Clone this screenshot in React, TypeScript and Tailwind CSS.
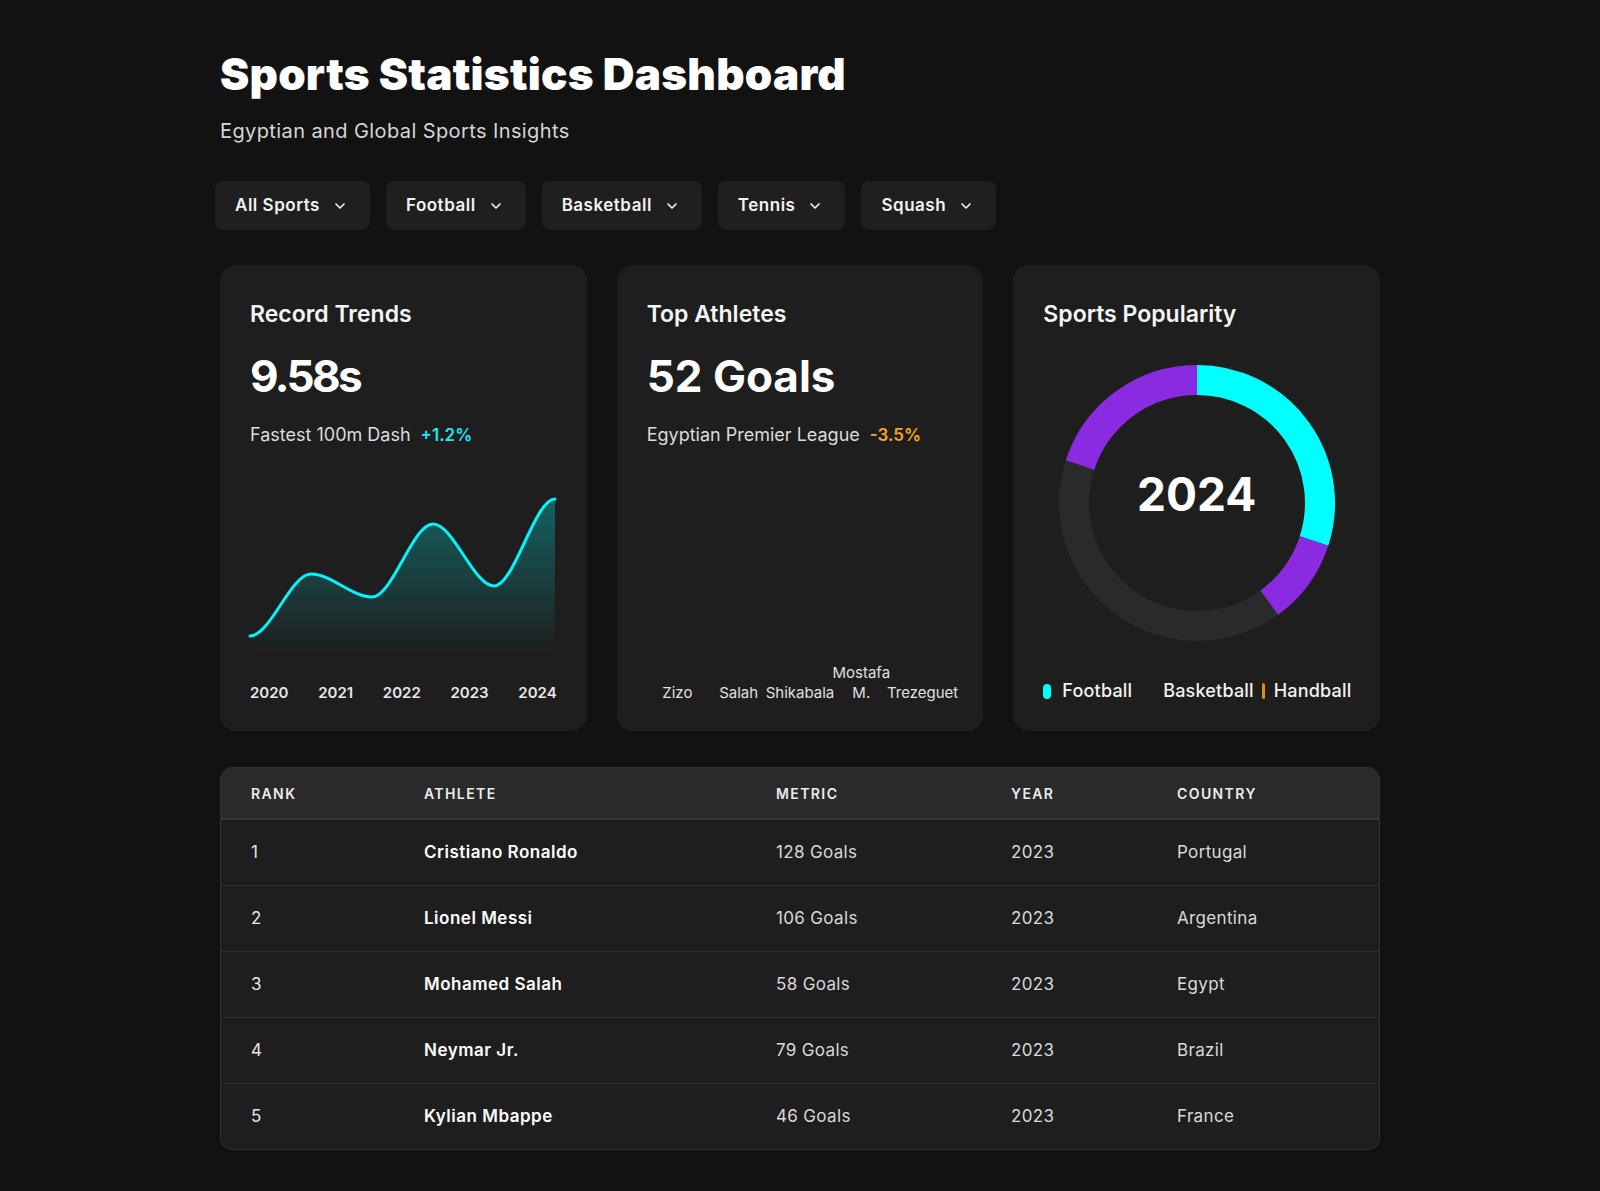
import React from "react";
import { ChevronDown } from "lucide-react";

const filters = ["All Sports", "Football", "Basketball", "Tennis", "Squash"];

const rows = [
  { rank: 1, name: "Cristiano Ronaldo", metric: "128 Goals", year: "2023", country: "Portugal" },
  { rank: 2, name: "Lionel Messi", metric: "106 Goals", year: "2023", country: "Argentina" },
  { rank: 3, name: "Mohamed Salah", metric: "58 Goals", year: "2023", country: "Egypt" },
  { rank: 4, name: "Neymar Jr.", metric: "79 Goals", year: "2023", country: "Brazil" },
  { rank: 5, name: "Kylian Mbappe", metric: "46 Goals", year: "2023", country: "France" },
];

const linePath =
  "M0,147 C20.33,147 40.67,85 61,85 C81.33,85 101.67,108 122,108 C142.33,108 162.67,35 183,35 C203.33,35 223.67,97 244,97 C264.33,97 284.67,10 305,10";

function arc(a0: number, a1: number) {
  const r = 123;
  const c = 138;
  const pt = (a: number) => {
    const t = (a * Math.PI) / 180;
    return [c + r * Math.sin(t), c - r * Math.cos(t)];
  };
  const [x0, y0] = pt(a0);
  const [x1, y1] = pt(a1);
  const large = a1 - a0 > 180 ? 1 : 0;
  return `M${x0.toFixed(2)},${y0.toFixed(2)} A${r},${r} 0 ${large} 1 ${x1.toFixed(2)},${y1.toFixed(2)}`;
}

function TrendChart() {
  return (
    <svg width="305" height="163" viewBox="0 0 305 163" className="block overflow-visible">
      <defs>
        <linearGradient id="trendFill" x1="0" y1="0" x2="0" y2="1">
          <stop offset="0%" stopColor="#00ffff" stopOpacity="0.3" />
          <stop offset="100%" stopColor="#00ffff" stopOpacity="0" />
        </linearGradient>
      </defs>
      <path d={`${linePath} L305,163 L0,163 Z`} fill="url(#trendFill)" />
      <path d={linePath} fill="none" stroke="#00f5ff" strokeWidth="3" strokeLinecap="round" />
    </svg>
  );
}

function Donut() {
  return (
    <div className="relative w-[276px] h-[276px] mx-auto mt-[35px]">
      <svg width="276" height="276" viewBox="0 0 276 276" className="block">
        <circle cx="138" cy="138" r="123" fill="none" stroke="#2a2a2a" strokeWidth="30" />
        <path d={arc(0, 108)} fill="none" stroke="#00ffff" strokeWidth="30" />
        <path d={arc(108, 144)} fill="none" stroke="#8a2be2" strokeWidth="30" />
        <path d={arc(288, 360)} fill="none" stroke="#8a2be2" strokeWidth="30" />
      </svg>
      <div className="absolute inset-0 flex items-center justify-center pb-[19px]">
        <span className="text-[46px] leading-[48px] font-bold text-white">2024</span>
      </div>
    </div>
  );
}

export default function App() {
  return (
    <div className="min-h-screen bg-[#121212] text-white font-['Inter',sans-serif]">
      <div className="w-[1160px] mx-auto pt-[52px] pb-[41px]">
        <h1 className="text-[44px] leading-[44px] font-black tracking-[0.005em] text-white">
          Sports Statistics Dashboard
        </h1>
        <p className="mt-[21px] text-[20px] leading-[28px] tracking-[0.02em] text-[#d6d6d6]">
          Egyptian and Global Sports Insights
        </p>

        <div className="mt-[36px] -ml-[5px] flex gap-4">
          {filters.map((f) => (
            <button
              key={f}
              className="h-[49px] pl-5 pr-[22px] rounded-lg bg-[#1f1f1f] flex items-center gap-3 text-[17px] tracking-[0.03em] font-semibold text-[#f2f2f2]"
            >
              <span>{f}</span>
              <ChevronDown size={16} strokeWidth={2.5} />
            </button>
          ))}
        </div>

        <div className="mt-[35px] grid grid-cols-3 gap-[30px]">
          {/* Record Trends */}
          <div className="h-[466px] rounded-2xl bg-[#1e1e1e] px-[30px] pt-[33px] pb-[28px] flex flex-col">
            <h2 className="text-[23px] leading-[32px] font-semibold text-[#f5f5f5]">Record Trends</h2>
            <div className="mt-[22px] text-[44px] leading-[48px] font-bold tracking-[-0.06em] text-white">9.58s</div>
            <div className="mt-[23px] text-[18px] leading-[24px] text-[#dcdcdc] flex items-center gap-[10px]">
              <span>Fastest 100m Dash</span>
              <span className="text-[#22e6f0] font-semibold text-[17px]">+1.2%</span>
            </div>
            <div className="mt-[42px]">
              <TrendChart />
            </div>
            <div className="mt-[31px] flex justify-between text-[15px] leading-[20px] font-semibold text-[#e6e6e6]">
              <span>2020</span>
              <span>2021</span>
              <span>2022</span>
              <span>2023</span>
              <span>2024</span>
            </div>
          </div>

          {/* Top Athletes */}
          <div className="h-[466px] rounded-2xl bg-[#1e1e1e] px-[30px] pt-[33px] pb-[28px] flex flex-col">
            <h2 className="text-[23px] leading-[32px] font-semibold text-[#f5f5f5]">Top Athletes</h2>
            <div className="mt-[22px] text-[44px] leading-[48px] font-bold text-white">52 Goals</div>
            <div className="mt-[23px] text-[18px] leading-[24px] text-[#dcdcdc] flex items-center gap-[10px]">
              <span>Egyptian Premier League</span>
              <span className="text-[#f5a623] font-semibold text-[17px]">-3.5%</span>
            </div>
            <div className="mt-auto flex items-end text-[15px] leading-[20px] text-[#e0e0e0]">
              {["Zizo", "Salah", "Shikabala", "Mostafa M.", "Trezeguet"].map((n) => (
                <div key={n} className="flex-1 min-w-0 flex flex-col items-center justify-end">
                  <div className="text-center">{n}</div>
                </div>
              ))}
            </div>
          </div>

          {/* Sports Popularity */}
          <div className="h-[466px] rounded-2xl bg-[#1e1e1e] px-[30px] pt-[33px] pb-[28px] flex flex-col">
            <h2 className="text-[23px] leading-[32px] font-semibold text-[#f5f5f5]">Sports Popularity</h2>
            <Donut />
            <div className="mt-[38px] flex items-center whitespace-nowrap text-[18px] leading-[24px] font-medium tracking-[0.01em] text-[#f2f2f2]">
              <span className="shrink-0 w-[8px] h-[15px] rounded-full bg-[#00ffff]" />
              <span className="shrink-0 ml-[11px]">Football</span>
              <span className="shrink-0 ml-[31px]">Basketball</span>
              <span className="shrink-0 ml-[8px] w-[3px] h-[16px] rounded-full bg-[#d98e1c]" />
              <span className="shrink-0 ml-[9px]">Handball</span>
            </div>
          </div>
        </div>

        <div className="mt-[36px] rounded-xl border border-[#303030] overflow-hidden bg-[#1e1e1e]">
          <div className="h-[52px] grid grid-cols-[173px_352px_235px_166px_1fr] items-center bg-[#2a2a2a] border-b-2 border-[#353535] text-[14px] font-semibold tracking-[0.1em] text-[#ececec]">
            <div className="px-[30px]">RANK</div>
            <div className="px-[30px]">ATHLETE</div>
            <div className="px-[30px]">METRIC</div>
            <div className="px-[30px]">YEAR</div>
            <div className="px-[30px]">COUNTRY</div>
          </div>
          {rows.map((r, i) => (
            <div
              key={r.rank}
              className={`h-[65px] grid grid-cols-[173px_352px_235px_166px_1fr] items-center text-[17px] tracking-[0.02em] ${
                i > 0 ? "border-t border-[#303030] box-content" : ""
              }`}
            >
              <div className="px-[30px] text-[#e6e6e6]">{r.rank}</div>
              <div className="px-[30px] font-semibold tracking-[0.03em] text-white">{r.name}</div>
              <div className="px-[30px] text-[#d9d9d9]">{r.metric}</div>
              <div className="px-[30px] text-[#d9d9d9]">{r.year}</div>
              <div className="px-[30px] text-[#d9d9d9]">{r.country}</div>
            </div>
          ))}
        </div>
      </div>
    </div>
  );
}
